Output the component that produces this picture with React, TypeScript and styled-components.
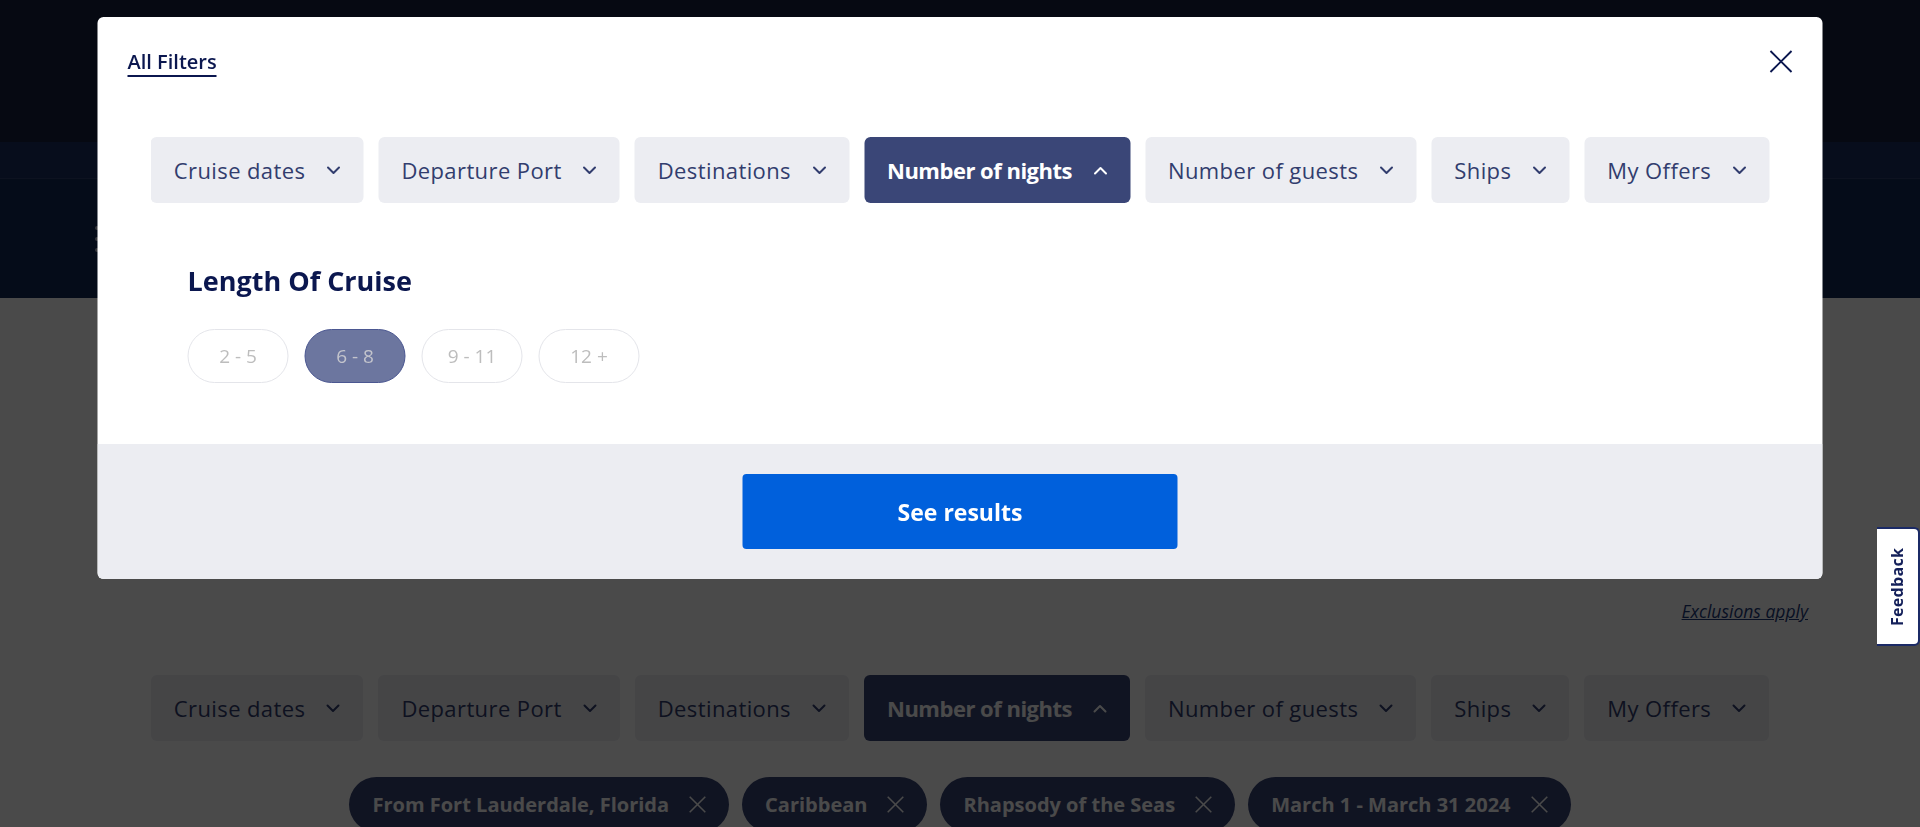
import React, { useState } from "react";
import styled, { createGlobalStyle } from "styled-components";

const NAVY = "#0b174f";
const BTN_TEXT = "#323d6e";
const ACTIVE = "#3a4677";
const SOFT = "#ecedf2";

const GlobalStyle = createGlobalStyle`
  html, body { margin: 0; padding: 0; }
  body {
    font-family: "Open Sans", Lato, Arial, sans-serif;
    background: #fff;
    overflow: hidden;
  }
  * { box-sizing: border-box; }
`;

const Page = styled.div`
  position: relative;
  width: 100%;
  height: 827px;
  overflow: hidden;
  background: #fff;
`;

const TopHeader = styled.header`
  height: 142px;
  background: #15223f;
`;

const SubNav = styled.nav`
  height: 37px;
  background: #1a2f60;
  border-bottom: 1px solid #2d4070;
`;

const Hero = styled.section`
  height: 119px;
  background: #142a56;
  display: flex;
  align-items: center;
  padding-left: 94px;
`;

const Content = styled.main`
  padding: 0 112px;
  display: flex;
  flex-direction: column;
`;

const SaleText = styled.p`
  margin: 260px 0 0;
  text-align: center;
  font-size: 20px;
  line-height: 26px;
  font-weight: 700;
  color: #111;
`;

const Exclusions = styled.a`
  margin-top: 16px;
  align-self: flex-end;
  font-size: 17.5px;
  line-height: 22px;
  font-style: italic;
  color: #1d3a7a;
  text-decoration: underline;
`;

const FilterBar = styled.div<{ $offset?: number }>`
  display: flex;
  justify-content: center;
  gap: 15px;
  margin-top: ${(p) => p.$offset ?? 0}px;
`;

const FilterButton = styled.button<{ $active?: boolean }>`
  height: 66px;
  display: flex;
  align-items: center;
  gap: 21px;
  padding: 0 23px;
  border: none;
  border-radius: 6px;
  background: ${(p) => (p.$active ? ACTIVE : SOFT)};
  color: ${(p) => (p.$active ? "#fff" : BTN_TEXT)};
  font-family: inherit;
  font-size: 22px;
  font-weight: ${(p) => (p.$active ? 700 : 500)};
  letter-spacing: ${(p) => (p.$active ? "-0.5px" : "0.4px")};
  white-space: nowrap;
  cursor: pointer;
`;

const ChipsRow = styled.div`
  display: flex;
  justify-content: center;
  gap: 13px;
  margin-top: 36px;
`;

const Chip = styled.span`
  height: 55px;
  display: inline-flex;
  align-items: center;
  gap: 20px;
  padding: 0 23px;
  border-radius: 28px;
  background: ${ACTIVE};
  color: #fff;
  font-size: 20px;
  font-weight: 700;
  white-space: nowrap;
`;

const Overlay = styled.div`
  position: fixed;
  inset: 0;
  background: rgba(0, 0, 0, 0.71);
`;

const Modal = styled.div`
  position: fixed;
  top: 17px;
  left: 50%;
  transform: translateX(-50%);
  width: 1725px;
  background: #fff;
  border-radius: 6px;
  overflow: hidden;
`;

const ModalBody = styled.div`
  padding: 33px 30px 61px;
`;

const TitleRow = styled.div`
  display: flex;
  justify-content: space-between;
  align-items: flex-start;
`;

const TabTitle = styled.span`
  font-size: 20px;
  line-height: 22px;
  font-weight: 600;
  color: ${NAVY};
  padding-top: 1px;
  padding-bottom: 2px;
  border-bottom: 2.5px solid ${NAVY};
`;

const CloseButton = styled.button`
  width: 23px;
  height: 23px;
  padding: 0;
  border: none;
  background: none;
  color: ${NAVY};
  cursor: pointer;
  display: flex;
`;

const Section = styled.section`
  margin: 62px 0 0 60px;
`;

const SectionTitle = styled.h2`
  margin: 0;
  font-size: 27px;
  line-height: 32px;
  font-weight: 700;
  color: ${NAVY};
`;

const PillRow = styled.div`
  display: flex;
  gap: 16px;
  margin-top: 32px;
`;

const Pill = styled.button<{ $selected?: boolean }>`
  width: 101px;
  height: 54px;
  border-radius: 27px;
  border: 1px solid ${(p) => (p.$selected ? "#4b5791" : "#e4e5ea")};
  background: ${(p) => (p.$selected ? "#6c769f" : "#fff")};
  color: ${(p) => (p.$selected ? "#c3c4cc" : "#bdbdbd")};
  font-family: inherit;
  font-size: 19px;
  font-weight: 500;
  cursor: pointer;
`;

const Footer = styled.div`
  background: ${SOFT};
  padding: 30px;
  display: flex;
  justify-content: center;
`;

const PrimaryButton = styled.button`
  width: 435px;
  height: 75px;
  border: none;
  border-radius: 4px;
  background: #0060dc;
  color: #fff;
  font-family: inherit;
  font-size: 23px;
  font-weight: 700;
  cursor: pointer;
`;

const FeedbackTab = styled.button`
  position: fixed;
  right: 0;
  top: 527px;
  width: 43px;
  height: 119px;
  padding: 0;
  background: #fff;
  border: 2px solid #1b2a66;
  border-right: none;
  border-radius: 6px 0 0 6px;
  color: #14205a;
  font-family: "Open Sans", Arial, sans-serif;
  font-size: 16px;
  font-weight: 700;
  letter-spacing: 0.3px;
  writing-mode: vertical-rl;
  transform: rotate(180deg);
  display: flex;
  align-items: center;
  justify-content: center;
`;

const Chevron = ({ up }: { up?: boolean }) => (
  <svg width="14" height="9" viewBox="0 0 14 9" fill="none">
    <path
      d={up ? "M1.5 7.5L7 2l5.5 5.5" : "M1.5 1.5L7 7l5.5-5.5"}
      stroke="currentColor"
      strokeWidth="2"
      strokeLinecap="round"
      strokeLinejoin="round"
    />
  </svg>
);

const CrossIcon = ({ size, stroke }: { size: number; stroke: number }) => (
  <svg width={size} height={size} viewBox="0 0 24 24" fill="none">
    <path d="M1 1L23 23M23 1L1 23" stroke="currentColor" strokeWidth={stroke} />
  </svg>
);

const DotsIcon = () => (
  <svg width="6" height="28" viewBox="0 0 6 28">
    <circle cx="3" cy="3" r="2" fill="#b9bfcc" />
    <circle cx="3" cy="14" r="2" fill="#b9bfcc" />
    <circle cx="3" cy="25" r="2" fill="#b9bfcc" />
  </svg>
);

const FILTERS = [
  "Cruise dates",
  "Departure Port",
  "Destinations",
  "Number of nights",
  "Number of guests",
  "Ships",
  "My Offers",
];
const ACTIVE_FILTER = 3;

const Filters = ({ offset }: { offset?: number }) => (
  <FilterBar $offset={offset}>
    {FILTERS.map((f, i) => (
      <FilterButton key={f} $active={i === ACTIVE_FILTER}>
        {f}
        <Chevron up={i === ACTIVE_FILTER} />
      </FilterButton>
    ))}
  </FilterBar>
);

const CHIPS = [
  "From Fort Lauderdale, Florida",
  "Caribbean",
  "Rhapsody of the Seas",
  "March 1 - March 31 2024",
];

const LENGTHS = ["2 - 5", "6 - 8", "9 - 11", "12 +"];

export default function App() {
  const [selected, setSelected] = useState(1);
  return (
    <>
      <GlobalStyle />
      <Page>
        <TopHeader />
        <SubNav />
        <Hero>
          <DotsIcon />
        </Hero>
        <Content>
          <SaleText>Sale ends in 2 hrs 2 mins 17 secs</SaleText>
          <Exclusions href="#">Exclusions apply</Exclusions>
          <Filters offset={53} />
          <ChipsRow>
            {CHIPS.map((c) => (
              <Chip key={c}>
                {c}
                <CrossIcon size={17} stroke={2.2} />
              </Chip>
            ))}
          </ChipsRow>
        </Content>
      </Page>
      <Overlay />
      <Modal role="dialog">
        <ModalBody>
          <TitleRow>
            <TabTitle>All Filters</TabTitle>
            <CloseButton aria-label="Close">
              <CrossIcon size={23} stroke={2} />
            </CloseButton>
          </TitleRow>
          <Filters offset={60} />
          <Section>
            <SectionTitle>Length Of Cruise</SectionTitle>
            <PillRow>
              {LENGTHS.map((l, i) => (
                <Pill key={l} $selected={i === selected} onClick={() => setSelected(i)}>
                  {l}
                </Pill>
              ))}
            </PillRow>
          </Section>
        </ModalBody>
        <Footer>
          <PrimaryButton>See results</PrimaryButton>
        </Footer>
      </Modal>
      <FeedbackTab>Feedback</FeedbackTab>
    </>
  );
}
